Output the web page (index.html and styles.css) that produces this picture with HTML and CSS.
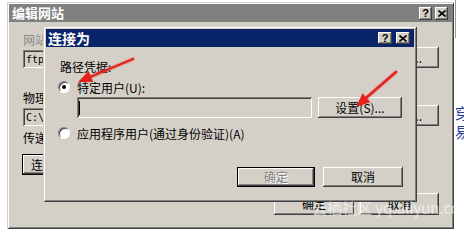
FILE: index.html
```html
<!DOCTYPE html>
<html>
<head>
<meta charset="utf-8">
<link rel="stylesheet" href="styles.css">
</head>
<body>
<div class="screen">
  <div class="desk-line"></div>
  <div class="desk-text"><span>穿</span><span>易</span></div>

  <div class="win win-outer">
    <div class="titlebar inactive">
      <span class="title t-outer">编辑网站</span>
      <span class="tbtns tb-outer">
        <span class="tbtn">?</span>
        <span class="tbtn"><svg width="8" height="7" viewBox="0 0 8 7"><path d="M0.5 0.5L7.5 6.5M7.5 0.5L0.5 6.5" stroke="#000" stroke-width="1.6"/></svg></span>
      </span>
    </div>
    <div class="outer-body">
      <div class="lbl gray">网站名称(S):</div>
      <div class="field-row">
        <div class="edit mono f-long">ftp</div>
        <div class="btn b-dots">...</div>
      </div>
      <div class="lbl l-phys">物理路径(P):</div>
      <div class="field-row">
        <div class="edit mono f-long">C:\inetpub\ftproot</div>
        <div class="btn b-dots">...</div>
      </div>
      <div class="lbl l-pass">传递身份验证:</div>
      <div class="btn default b-conn">连接为(C)...</div>
      <div class="footer outer-footer">
        <div class="btn b-ok-outer">确定</div>
        <div class="btn b-cancel-outer">取消</div>
      </div>
    </div>
  </div>

  <div class="win win-inner">
    <div class="titlebar active">
      <span class="title t-inner">连接为</span>
      <span class="tbtns tb-inner">
        <span class="tbtn tbtn-i">?</span>
        <span class="tbtn tbtn-i"><svg width="8" height="7" viewBox="0 0 8 7"><path d="M0.5 0.5L7.5 6.5M7.5 0.5L0.5 6.5" stroke="#000" stroke-width="1.6"/></svg></span>
      </span>
    </div>
    <div class="inner-body">
      <div class="lbl l-cred">路径凭据:</div>
      <div class="radio-row r-first">
        <span class="radio on"></span>
        <span>特定用户(U):</span>
      </div>
      <div class="input-row">
        <div class="edit f-user"><span class="caret"></span></div>
        <div class="btn b-set">设置(S)...</div>
      </div>
      <div class="radio-row r-second">
        <span class="radio"></span>
        <span>应用程序用户(通过身份验证)(A)</span>
      </div>
      <div class="footer inner-footer">
        <div class="btn default disabled b-ok">确定</div>
        <div class="btn b-cancel">取消</div>
      </div>
    </div>
  </div>

  <svg class="arrows" width="464" height="235" viewBox="0 0 464 235">
    <g stroke="rgba(240,90,90,0.35)" stroke-width="4.5" stroke-linecap="round" fill="none">
      <path d="M133 59L91 76.6"/>
      <path d="M396 72L366.5 97.8"/>
    </g>
    <g stroke="#e3221c" stroke-width="2.4" stroke-linecap="round" fill="none">
      <path d="M133 59L90 77"/>
      <path d="M396 72L366 98"/>
    </g>
    <g fill="#e3221c">
      <polygon points="78,82 93.2,82.1 88.6,71.1"/>
      <polygon points="356,107 370.4,102.3 362.6,93.3"/>
    </g>
  </svg>

  <div class="watermark">云栖社区 yq.aliyun.com</div>
</div>
</body>
</html>
```

FILE: styles.css
```css
* {
  box-sizing: border-box;
  margin: 0;
  padding: 0;
}

html, body {
  width: 464px;
  height: 235px;
  overflow: hidden;
  background: #ffffff;
}

body {
  font-family: "Noto Sans CJK SC", "Noto Sans", sans-serif;
  font-size: 12px;
  color: #000;
}

.screen {
  position: relative;
  width: 464px;
  height: 235px;
}

/* desktop bits behind the windows */
.desk-line {
  position: absolute;
  left: 455px;
  top: 0;
  width: 1px;
  height: 38px;
  background: #9a9a9a;
}

.desk-text {
  position: absolute;
  left: 455px;
  top: 103px;
  display: flex;
  flex-direction: column;
  font-size: 15px;
  line-height: 19px;
  color: #1f3fa8;
}

/* windows */
.win {
  position: absolute;
  background: #d4d0c8;
  display: flex;
  flex-direction: column;
  box-shadow:
    inset 1px 1px #d4d0c8,
    inset -1px -1px #404040,
    inset 2px 2px #ffffff,
    inset -2px -2px #808080;
}

.win-outer {
  left: 7px;
  top: 2px;
  width: 447px;
  height: 227px;
  padding: 2px;
}

.win-inner {
  left: 43px;
  top: 26px;
  width: 374px;
  height: 176px;
  padding: 3px;
}

.titlebar {
  height: 18px;
  flex: none;
  display: flex;
  align-items: center;
  justify-content: space-between;
  color: #fff;
  font-weight: bold;
}

.inactive {
  background: #808080;
  padding: 0 4px 0 3px;
}

.active {
  background: #0a246a;
  padding: 0 4px 0 2px;
}

.title {
  line-height: 18px;
  white-space: nowrap;
}

.t-outer {
  font-size: 13px;
}

.t-inner {
  font-size: 14px;
}

.tbtns {
  display: flex;
}

.tb-outer {
  gap: 3px;
}

.tb-inner {
  gap: 4px;
}

.tbtn {
  width: 13px;
  height: 13px;
  display: flex;
  align-items: center;
  justify-content: center;
  background: #d4d0c8;
  color: #000;
  font: bold 11px/13px "Liberation Sans", sans-serif;
  box-shadow:
    inset -1px -1px #404040,
    inset 1px 1px #ffffff,
    inset -2px -2px #808080;
}

.tbtn-i {
  width: 14px;
  height: 12px;
  line-height: 12px;
}

/* generic controls */
.lbl {
  height: 14px;
  line-height: 14px;
  white-space: nowrap;
}

.gray {
  color: #8a8a8a;
}

.btn {
  display: flex;
  align-items: center;
  justify-content: center;
  background: #d4d0c8;
  line-height: 14px;
  white-space: nowrap;
  box-shadow:
    inset -1px -1px #404040,
    inset 1px 1px #ffffff,
    inset -2px -2px #808080;
}

.btn.default {
  border: 1px solid #000;
}

.btn.disabled {
  color: #808080;
  text-shadow: 1px 1px #ffffff;
}

.edit {
  display: flex;
  align-items: center;
  padding-left: 4px;
  background: #d4d0c8;
  white-space: nowrap;
  overflow: hidden;
  box-shadow:
    inset 1px 1px #808080,
    inset -1px -1px #ffffff,
    inset 2px 2px #404040,
    inset -2px -2px #d4d0c8;
}

.mono {
  font-family: "DejaVu Sans Mono", "Liberation Mono", monospace;
  font-size: 10px;
  padding-left: 3px;
}

.caret {
  width: 1px;
  height: 14px;
  background: #000;
}

.footer {
  margin-top: auto;
  display: flex;
  justify-content: flex-end;
}

/* outer dialog content */
.outer-body {
  flex: 1;
  display: flex;
  flex-direction: column;
  padding: 11px 13px 12px 14px;
}

.field-row {
  display: flex;
  align-items: flex-end;
  gap: 6px;
  height: 21px;
}

.f-long {
  width: 366px;
  height: 18px;
}

.b-dots {
  width: 44px;
  height: 21px;
  align-items: flex-end;
  padding-bottom: 3px;
}

.l-phys {
  margin-top: 23px;
}

.l-pass {
  margin-top: 5px;
}

.b-conn {
  margin-top: 9px;
  margin-left: -1px;
  width: 80px;
  height: 21px;
}

.outer-footer {
  gap: 6px;
}

.b-ok-outer {
  width: 80px;
  height: 22px;
}

.b-cancel-outer {
  width: 79px;
  height: 22px;
}

/* inner dialog content */
.inner-body {
  flex: 1;
  display: flex;
  flex-direction: column;
  padding: 13px 11px 12px 12px;
}

.l-cred {
  margin-left: 2px;
}

.radio-row {
  display: flex;
  align-items: center;
  gap: 7px;
  height: 14px;
  white-space: nowrap;
}

.r-first {
  margin-top: 6px;
}

.r-second {
  margin-top: 8px;
}

.radio {
  position: relative;
  width: 12px;
  height: 12px;
  flex: none;
  border-radius: 50%;
  background: #fff;
  border: 1px solid;
  border-color: #808080 #ffffff #ffffff #808080;
  box-shadow: inset 1px 1px #404040;
}

.radio.on::after {
  content: "";
  position: absolute;
  left: 3px;
  top: 3px;
  width: 4px;
  height: 4px;
  border-radius: 50%;
  background: #000;
}

.input-row {
  display: flex;
  gap: 6px;
  margin-top: 3px;
  margin-left: 19px;
}

.f-user {
  width: 235px;
  height: 21px;
  padding-left: 2px;
}

.b-set {
  width: 84px;
  height: 21px;
}

.inner-footer {
  gap: 8px;
}

.b-ok {
  width: 78px;
  height: 20px;
}

.b-cancel {
  width: 80px;
  height: 20px;
}

/* overlays */
.arrows {
  position: absolute;
  left: 0;
  top: 0;
  pointer-events: none;
}

.watermark {
  position: absolute;
  left: 312px;
  top: 198px;
  font-size: 15px;
  line-height: 20px;
  color: rgba(255, 255, 255, 0.6);
  white-space: nowrap;
  pointer-events: none;
}
```
